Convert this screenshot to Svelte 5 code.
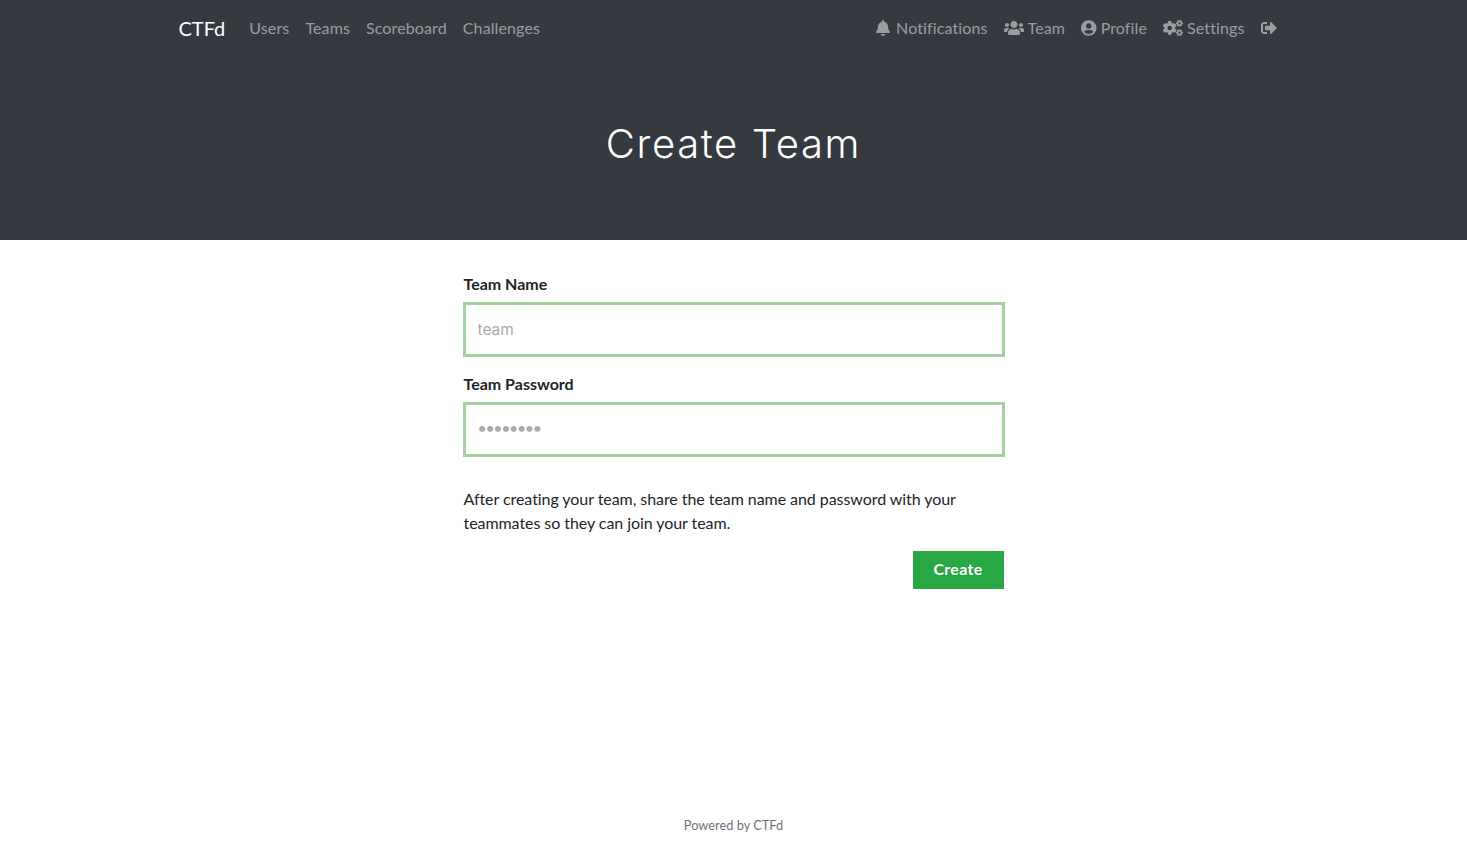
<script>
    const leftLinks = ['Users', 'Teams', 'Scoreboard', 'Challenges'];

    // font awesome solid shapes, viewBox width + path
    const icons = {
        bell: [448, 'M224 512c35.32 0 63.97-28.65 63.97-64H160.03c0 35.35 28.65 64 63.97 64zm215.39-149.71c-19.32-20.76-55.47-51.99-55.47-154.29 0-77.7-54.48-139.9-127.94-155.16V32c0-17.67-14.32-32-31.98-32s-31.98 14.33-31.98 32v20.84C118.56 68.1 64.08 130.3 64.08 208c0 102.3-36.15 133.53-55.47 154.29-6 6.45-8.66 14.16-8.61 21.71.11 16.4 12.98 32 32.1 32h383.8c19.12 0 32-15.6 32.1-32 .05-7.55-2.61-15.27-8.61-21.71z'],
        users: [640, 'M96 224c35.3 0 64-28.7 64-64s-28.7-64-64-64-64 28.7-64 64 28.7 64 64 64zm448 0c35.3 0 64-28.7 64-64s-28.7-64-64-64-64 28.7-64 64 28.7 64 64 64zm32 32h-64c-17.6 0-33.5 7.1-45.1 18.6 40.3 22.1 68.9 62 75.1 109.4h66c17.7 0 32-14.3 32-32v-32c0-35.3-28.7-64-64-64zm-256 0c61.9 0 112-50.1 112-112S381.9 32 320 32 208 82.1 208 144s50.1 112 112 112zm76.8 32h-8.3c-20.8 10-43.9 16-68.5 16s-47.6-6-68.5-16h-8.3C179.6 288 128 339.6 128 403.2V432c0 26.5 21.5 48 48 48h288c26.5 0 48-21.5 48-48v-28.8c0-63.6-51.6-115.2-115.2-115.2zm-223.7-13.4C161.5 263.1 145.6 256 128 256H64c-35.3 0-64 28.7-64 64v32c0 17.7 14.3 32 32 32h65.9c6.3-47.4 34.9-87.3 75.2-109.4z'],
        user: [496, 'M248 8C111 8 0 119 0 256s111 248 248 248 248-111 248-248S385 8 248 8zm0 96c48.6 0 88 39.4 88 88s-39.4 88-88 88-88-39.4-88-88 39.4-88 88-88zm0 344c-58.7 0-111.3-26.6-146.5-68.2 18.8-35.4 55.6-59.8 98.5-59.8 2.4 0 4.8.4 7.1 1.1 13 4.2 26.6 6.9 40.9 6.9 14.3 0 28-2.7 40.9-6.9 2.3-.7 4.7-1.1 7.1-1.1 42.9 0 79.7 24.4 98.5 59.8C359.3 421.4 306.7 448 248 448z'],
        cogs: [640, 'M512.1 191l-8.2 14.3c-3 5.3-9.4 7.5-15.1 5.4-11.8-4.4-22.6-10.7-32.1-18.6-4.6-3.8-5.8-10.5-2.8-15.7l8.2-14.3c-6.9-8-12.3-17.3-15.9-27.4h-16.5c-6 0-11.2-4.3-12.2-10.3-2-12-2.1-24.6 0-37.1 1-6 6.2-10.4 12.2-10.4h16.5c3.6-10.1 9-19.4 15.9-27.4l-8.2-14.3c-3-5.2-1.9-11.9 2.8-15.7 9.5-7.9 20.4-14.2 32.1-18.6 5.7-2.1 12.1.1 15.1 5.4l8.2 14.3c10.5-1.9 21.2-1.9 31.7 0L552 6.3c3-5.3 9.4-7.5 15.1-5.4 11.8 4.4 22.6 10.7 32.1 18.6 4.6 3.8 5.8 10.5 2.8 15.7l-8.2 14.3c6.9 8 12.3 17.3 15.9 27.4h16.5c6 0 11.2 4.3 12.2 10.3 2 12 2.1 24.6 0 37.1-1 6-6.2 10.4-12.2 10.4h-16.5c-3.6 10.1-9 19.4-15.9 27.4l8.2 14.3c3 5.2 1.9 11.9-2.8 15.7-9.5 7.9-20.4 14.2-32.1 18.6-5.7 2.1-12.1-.1-15.1-5.4l-8.2-14.3c-10.4 1.9-21.2 1.9-31.7 0zm-10.5-58.8c38.5 29.6 82.4-14.3 52.8-52.8-38.5-29.7-82.4 14.3-52.8 52.8zM386.3 286.1l33.7 16.8c10.1 5.8 14.5 18.1 10.5 29.1-8.9 24.2-26.4 46.4-42.6 65.8-7.4 8.9-20.2 11.1-30.3 5.3l-29.1-16.8c-16 13.7-34.6 24.6-54.9 31.7v33.6c0 11.6-8.3 21.6-19.7 23.6-24.6 4.2-50.4 4.4-75.9 0-11.5-2-20-11.9-20-23.6V418c-20.3-7.2-38.9-18-54.9-31.7L74 403c-10 5.8-22.9 3.6-30.3-5.3-16.2-19.4-33.3-41.6-42.2-65.7-4-10.9.4-23.2 10.5-29.1l33.3-16.8c-3.9-20.9-3.9-42.4 0-63.4L12 205.8c-10.1-5.8-14.6-18.1-10.5-29 8.9-24.2 26-46.4 42.2-65.8 7.4-8.9 20.2-11.1 30.3-5.3l29.1 16.8c16-13.7 34.6-24.6 54.9-31.7V57.1c0-11.5 8.2-21.5 19.6-23.5 24.6-4.2 50.5-4.4 76-.1 11.5 2 20 11.9 20 23.6v33.6c20.3 7.2 38.9 18 54.9 31.7l29.1-16.8c10-5.8 22.9-3.6 30.3 5.3 16.2 19.4 33.2 41.6 42.1 65.8 4 10.9.1 23.2-10 29.1l-33.7 16.8c3.9 21 3.9 42.5 0 63.5zm-117.6 21.1c59.2-77-28.7-164.9-105.7-105.7-59.2 77 28.7 164.9 105.7 105.7zm243.4 182.7l-8.2 14.3c-3 5.3-9.4 7.5-15.1 5.4-11.8-4.4-22.6-10.7-32.1-18.6-4.6-3.8-5.8-10.5-2.8-15.7l8.2-14.3c-6.9-8-12.3-17.3-15.9-27.4h-16.5c-6 0-11.2-4.3-12.2-10.3-2-12-2.1-24.6 0-37.1 1-6 6.2-10.4 12.2-10.4h16.5c3.6-10.1 9-19.4 15.9-27.4l-8.2-14.3c-3-5.2-1.9-11.9 2.8-15.7 9.5-7.9 20.4-14.2 32.1-18.6 5.7-2.1 12.1.1 15.1 5.4l8.2 14.3c10.5-1.9 21.2-1.9 31.7 0l8.2-14.3c3-5.3 9.4-7.5 15.1-5.4 11.8 4.4 22.6 10.7 32.1 18.6 4.6 3.8 5.8 10.5 2.8 15.7l-8.2 14.3c6.9 8 12.3 17.3 15.9 27.4h16.5c6 0 11.2 4.3 12.2 10.3 2 12 2.1 24.6 0 37.1-1 6-6.2 10.4-12.2 10.4h-16.5c-3.6 10.1-9 19.4-15.9 27.4l8.2 14.3c3 5.2 1.9 11.9-2.8 15.7-9.5 7.9-20.4 14.2-32.1 18.6-5.7 2.1-12.1-.1-15.1-5.4l-8.2-14.3c-10.4 1.9-21.2 1.9-31.7 0zM501.6 431c38.5 29.6 82.4-14.3 52.8-52.8-38.5-29.6-82.4 14.3-52.8 52.8z'],
        signOut: [512, 'M497 273L329 441c-15 15-41 4.5-41-17v-96H152c-13.3 0-24-10.7-24-24v-96c0-13.3 10.7-24 24-24h136V88c0-21.4 25.9-32 41-17l168 168c9.3 9.4 9.3 24.6 0 34zM192 436v-40c0-6.6-5.4-12-12-12H96c-17.7 0-32-14.3-32-32V160c0-17.7 14.3-32 32-32h84c6.6 0 12-5.4 12-12V76c0-6.6-5.4-12-12-12H96c-53 0-96 43-96 96v192c0 53 43 96 96 96h84c6.6 0 12-5.4 12-12z']
    };

    const rightLinks = [
        { icon: 'bell', text: 'Notifications' },
        { icon: 'users', text: 'Team' },
        { icon: 'user', text: 'Profile' },
        { icon: 'cogs', text: 'Settings' },
        { icon: 'signOut', text: '' }
    ];
</script>

<div class="page">
    <nav class="navbar">
        <div class="nav-inner">
            <a class="brand" href="#top">CTFd</a>
            <ul class="links">
                {#each leftLinks as link}
                    <li><a href="#top">{link}</a></li>
                {/each}
            </ul>
            <ul class="links right">
                {#each rightLinks as link}
                    <li>
                        <a href="#top" class:wide-gap={link.icon === 'bell'}>
                            <svg class="icon" viewBox="0 0 {icons[link.icon][0]} 512" aria-hidden="true">
                                <path fill="currentColor" d={icons[link.icon][1]} />
                            </svg>
                            {#if link.text}<span>{link.text}</span>{/if}
                        </a>
                    </li>
                {/each}
            </ul>
        </div>
    </nav>

    <header class="jumbotron">
        <h1>Create Team</h1>
    </header>

    <main class="content">
        <form>
            <div class="form-group">
                <label for="name">Team Name</label>
                <input id="name" type="text" placeholder="team" />
            </div>
            <div class="form-group">
                <label for="password">Team Password</label>
                <input id="password" class="dots" type="password" placeholder="••••••••" />
            </div>
            <p>After creating your team, share the team name and password with your teammates so they can join your team.</p>
            <div class="actions">
                <button type="button">Create</button>
            </div>
        </form>
    </main>

    <footer>Powered by CTFd</footer>
</div>

<style>
    :global(body) {
        margin: 0;
        background: #fff;
    }

    .page {
        height: 855px;
        display: flex;
        flex-direction: column;
        font-family: Lato, "Liberation Sans", sans-serif;
        font-size: 16px;
        line-height: 24px;
        color: #212529;
    }

    .navbar {
        background: #343a40;
        height: 56px;
        box-sizing: border-box;
        padding: 8px 16px;
    }

    .nav-inner {
        width: 1110px;
        margin: 0 auto;
        display: flex;
        align-items: center;
        height: 40px;
    }

    .brand {
        color: #fff;
        font-size: 20px;
        line-height: 30px;
        margin-right: 16px;
        text-decoration: none;
    }

    .links {
        list-style: none;
        margin: 0;
        padding: 0;
        display: flex;
        align-items: center;
    }

    .links.right {
        margin-left: auto;
        margin-right: 4px;
    }

    .links a {
        display: flex;
        align-items: center;
        gap: 4px;
        padding: 8px;
        color: rgba(255, 255, 255, 0.5);
        letter-spacing: 0.12px;
        text-decoration: none;
    }

    .links a.wide-gap {
        gap: 6px;
    }

    .icon {
        height: 16px;
        display: block;
    }

    .jumbotron {
        background: #343a40;
        height: 184px;
        display: flex;
        align-items: center;
        justify-content: center;
    }

    h1 {
        margin: 0;
        color: #fff;
        font-family: Inter, sans-serif;
        font-weight: 300;
        font-size: 40px;
        line-height: 48px;
        letter-spacing: 1.65px;
        position: relative;
        top: -4px;
    }

    .content {
        flex: 1;
        display: flex;
        justify-content: center;
        padding-top: 32px;
    }

    form {
        width: 540px;
    }

    .form-group {
        margin-bottom: 15px;
    }

    label {
        display: block;
        font-weight: 700;
        margin-bottom: 6px;
    }

    input {
        display: block;
        box-sizing: border-box;
        width: 542px;
        height: 55px;
        margin-left: -1px;
        padding: 0 12px;
        border: 3px solid #a3d39c;
        border-radius: 0;
        outline: none;
        font-family: Inter, sans-serif;
        font-size: 15.5px;
    }

    input::placeholder {
        color: #aaa;
    }

    /* the bullets sit a little above the middle of the field */
    input.dots {
        font-family: Lato, sans-serif;
        font-size: 16px;
        letter-spacing: -1.4px;
        padding-bottom: 5px;
    }

    p {
        margin: 30px 0 16px;
        letter-spacing: -0.06px;
    }

    .actions {
        display: flex;
        justify-content: flex-end;
    }

    button {
        width: 91px;
        height: 38px;
        padding: 0 0 3px;
        background: #28a745;
        border: none;
        color: #fff;
        font-family: Lato, sans-serif;
        font-size: 16px;
        font-weight: 700;
        letter-spacing: 0.3px;
    }

    footer {
        text-align: center;
        font-size: 12.8px;
        line-height: 20px;
        color: #6c757d;
        padding-bottom: 20px;
    }
</style>
